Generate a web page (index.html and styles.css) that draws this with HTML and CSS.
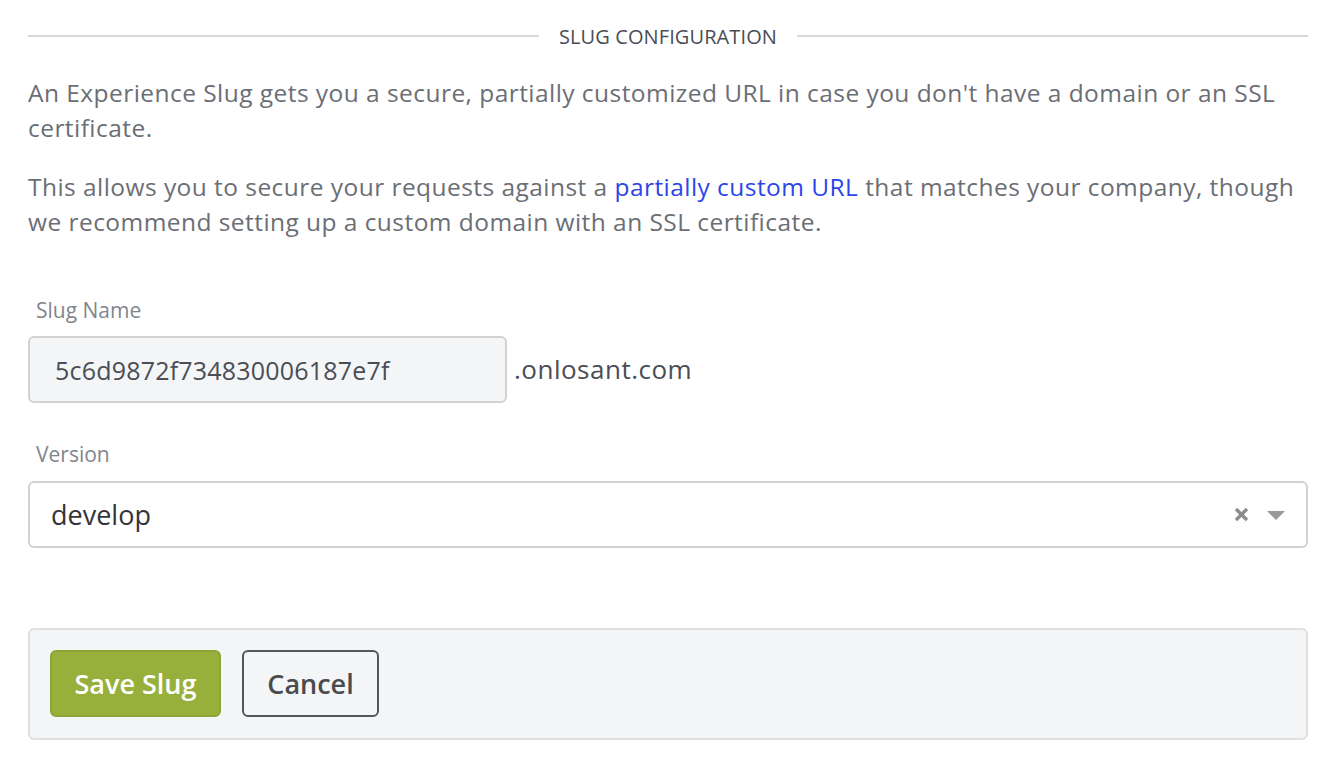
FILE: index.html
```html
<!DOCTYPE html>
<html>
<head>
<meta charset="utf-8">
<link rel="stylesheet" href="styles.css">
</head>
<body>
<div class="page">
  <div class="divider">
    <span class="divider-line"></span>
    <span class="divider-title">SLUG CONFIGURATION</span>
    <span class="divider-line"></span>
  </div>
  <p class="desc desc-first">An Experience Slug gets you a secure, partially customized URL in case you don't have a domain or an SSL certificate.</p>
  <p class="desc">This allows you to secure your requests against a <a class="link" href="#">partially custom URL</a> that matches your company, though we recommend setting up a custom domain with an SSL certificate.</p>

  <div class="field field-slug">
    <label class="label">Slug Name</label>
    <div class="slug-row">
      <div class="input input-disabled">5c6d9872f734830006187e7f</div>
      <span class="suffix">.onlosant.com</span>
    </div>
  </div>

  <div class="field field-version">
    <label class="label">Version</label>
    <div class="select">
      <span class="select-value">develop</span>
      <svg class="select-clear" width="15" height="15" viewBox="0 0 15 15"><path d="M2 2 L13 13 M13 2 L2 13" stroke="#8c8c8c" stroke-width="3.4" stroke-linecap="butt"/></svg>
      <span class="select-arrow"></span>
    </div>
  </div>

  <div class="actions">
    <button class="btn btn-primary">Save Slug</button>
    <button class="btn btn-default">Cancel</button>
  </div>
</div>
</body>
</html>
```
FILE: styles.css
```css
* { box-sizing: border-box; }
html, body { margin: 0; padding: 0; background: #fff; }
body {
  font-family: "Open Sans", "Noto Sans", sans-serif;
  color: #6b6e75;
}
.page {
  padding: 20px 32px 0 28px;
  width: 1340px;
}
.divider {
  display: flex;
  align-items: center;
  gap: 20px;
  height: 32px;
}
.divider-line {
  flex: 1;
  height: 2px;
  background: #d9d9d9;
}
.divider-title {
  font-size: 20px;
  color: #4a4d55;
  letter-spacing: 0.1px;
}
.desc {
  font-size: 24.5px;
  line-height: 35px;
  margin: 23.5px 0 0 0;
  letter-spacing: 0.45px;
}
.desc-first { margin-top: 23px; }
.link { color: #2c45e8; text-decoration: none; }
.field-slug { margin-top: 58.5px; }
.label {
  display: block;
  font-size: 21px;
  color: #82858c;
  line-height: 26px;
  padding-left: 8px;
}
.slug-row {
  display: flex;
  align-items: center;
  margin-top: 13px;
}
.input {
  width: 479px;
  height: 67px;
  border: 2px solid #d2d2d2;
  border-radius: 6px;
  display: flex;
  align-items: center;
  padding-left: 25px;
  font-size: 25px;
  color: #4a4d55;
  letter-spacing: 0.2px;
}
.input-disabled { background: #f4f5f7; }
.suffix {
  margin-left: 7px;
  font-size: 26px;
  color: #4a4d55;
  letter-spacing: 0.5px;
  margin-top: -2px;
}
.field-version { margin-top: 38px; }
.select {
  margin-top: 14px;
  height: 67px;
  border: 2px solid #d2d2d2;
  border-radius: 6px;
  display: flex;
  align-items: center;
  padding: 0 21px 0 21px;
}
.select-value {
  flex: 1;
  font-size: 27px;
  color: #333438;
}
.select-clear {
  margin-right: 18px;
  display: block;
}
.select-arrow {
  width: 0;
  height: 0;
  border-left: 9px solid transparent;
  border-right: 9px solid transparent;
  border-top: 9px solid #999;
  margin-top: 2px;
}
.actions {
  margin-top: 80px;
  background: #f4f5f7;
  border: 2px solid #dedfe1;
  border-radius: 6px;
  padding: 20px 20px;
  display: flex;
  gap: 21px;
  height: 112px;
}
.btn {
  height: 67px;
  border-radius: 6px;
  font-family: inherit;
  font-size: 27px;
  font-weight: 600;
  padding: 0;
}
.btn-primary {
  width: 171px;
  background: #97b03b;
  border: 2px solid #8ca336;
  color: #fff;
}
.btn-default {
  width: 137px;
  background: #fff0;
  border: 2px solid #555659;
  color: #4a4b4e;
}
```
